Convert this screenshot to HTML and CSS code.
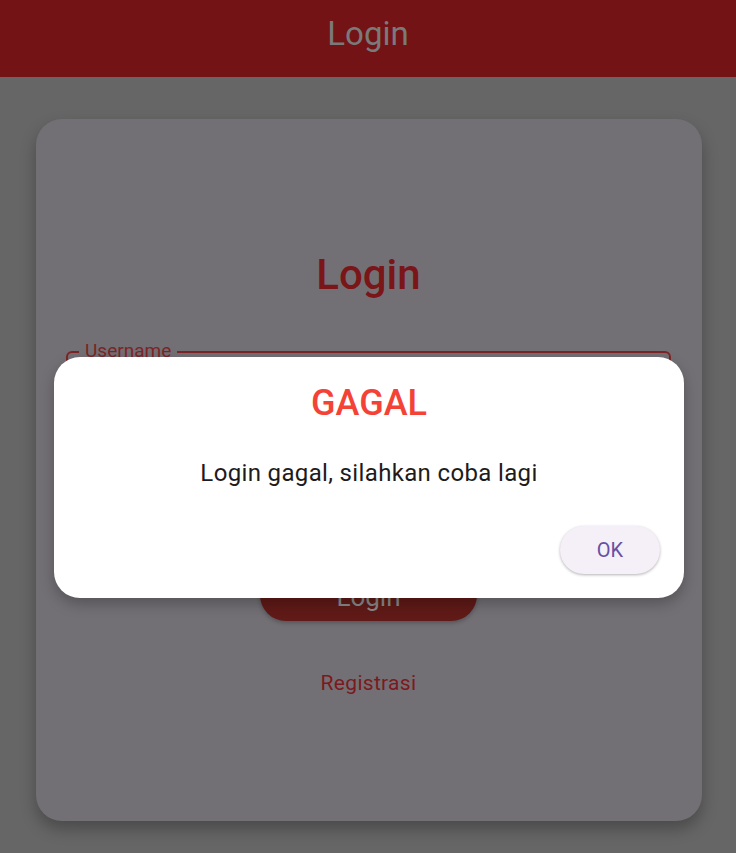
FILE: index.html
```html
<!DOCTYPE html>
<html lang="id">
<head>
<meta charset="utf-8">
<title>Login</title>
<link rel="stylesheet" href="styles.css">
</head>
<body>
<div class="app">
  <header class="appbar"><span class="appbar-title">Login</span></header>
  <main class="content">
    <section class="card">
      <h1 class="card-title">Login</h1>
      <div class="field">
        <span class="field-label">Username</span>
      </div>
      <div class="field field-second">
        <span class="field-label">Password</span>
      </div>
      <button class="login-btn">Login</button>
      <a class="register-link">Registrasi</a>
    </section>
  </main>
  <div class="dialog">
    <h2 class="dialog-title">GAGAL</h2>
    <p class="dialog-message">Login gagal, silahkan coba lagi</p>
    <div class="dialog-actions">
      <button class="ok-btn">OK</button>
    </div>
  </div>
</div>
</body>
</html>
```

FILE: styles.css
```css
* { box-sizing: border-box; }
html, body {
  margin: 0;
  padding: 0;
  background: #666666;
  font-family: Roboto, "Noto Sans", sans-serif;
}
.app {
  position: relative;
  width: 736px;
  height: 853px;
  overflow: hidden;
  background: #666666;
}
.appbar {
  height: 77px;
  background: #731315;
  display: flex;
  align-items: center;
  justify-content: center;
}
.appbar-title {
  color: #7a7a7a;
  font-size: 33px;
  line-height: 40px;
  margin-top: -9px;
}
.content {
  padding: 42px 34px 0 36px;
}
.card {
  height: 702px;
  background: #737075;
  border-radius: 26px;
  box-shadow: 0 8px 16px rgba(0,0,0,0.28);
  padding: 6px 31px 0 30px;
  display: flex;
  flex-direction: column;
  align-items: center;
  justify-content: center;
}
.card-title {
  margin: 0;
  font-size: 42px;
  line-height: 48px;
  font-weight: 500;
  color: #7a1518;
}
.field {
  position: relative;
  align-self: stretch;
  height: 80px;
  margin-top: 52px;
  border: 2px solid #7e2426;
  border-radius: 6px;
}
.field-second {
  margin-top: 16px;
}
.field-label {
  position: absolute;
  left: 11px;
  top: -14px;
  padding: 0 6px;
  background: #737075;
  color: #7e2426;
  font-size: 19px;
  line-height: 24px;
}
.login-btn {
  margin-top: 42px;
  width: 217px;
  height: 52px;
  border: none;
  border-radius: 26px;
  background: #601a17;
  color: #8a8a8a;
  font-family: inherit;
  font-size: 26px;
  line-height: 30px;
  padding: 4px 0 0 0;
  box-shadow: 0 2px 4px rgba(0,0,0,0.25);
}
.register-link {
  margin-top: 50px;
  font-size: 21px;
  line-height: 24px;
  color: #7b1a1e;
  letter-spacing: 0.3px;
}
.dialog {
  position: absolute;
  left: 54px;
  top: 357px;
  width: 630px;
  height: 241px;
  background: #ffffff;
  border-radius: 26px;
  box-shadow: 0 6px 14px rgba(0,0,0,0.25);
  padding: 24px 24px 24px 24px;
  display: flex;
  flex-direction: column;
  align-items: center;
}
.dialog-title {
  margin: 0;
  font-size: 36px;
  line-height: 44px;
  font-weight: 500;
  color: #f44336;
}
.dialog-message {
  margin: 33px 0 0 0;
  font-size: 24px;
  line-height: 30px;
  color: #1d1b20;
  letter-spacing: 0.35px;
}
.dialog-actions {
  align-self: stretch;
  display: flex;
  justify-content: flex-end;
  margin-top: 38px;
}
.ok-btn {
  width: 100px;
  height: 48px;
  border: none;
  border-radius: 24px;
  background: #f5eff8;
  color: #6750a4;
  font-family: inherit;
  font-size: 20px;
  box-shadow: 0 1px 3px rgba(0,0,0,0.3);
}
```
